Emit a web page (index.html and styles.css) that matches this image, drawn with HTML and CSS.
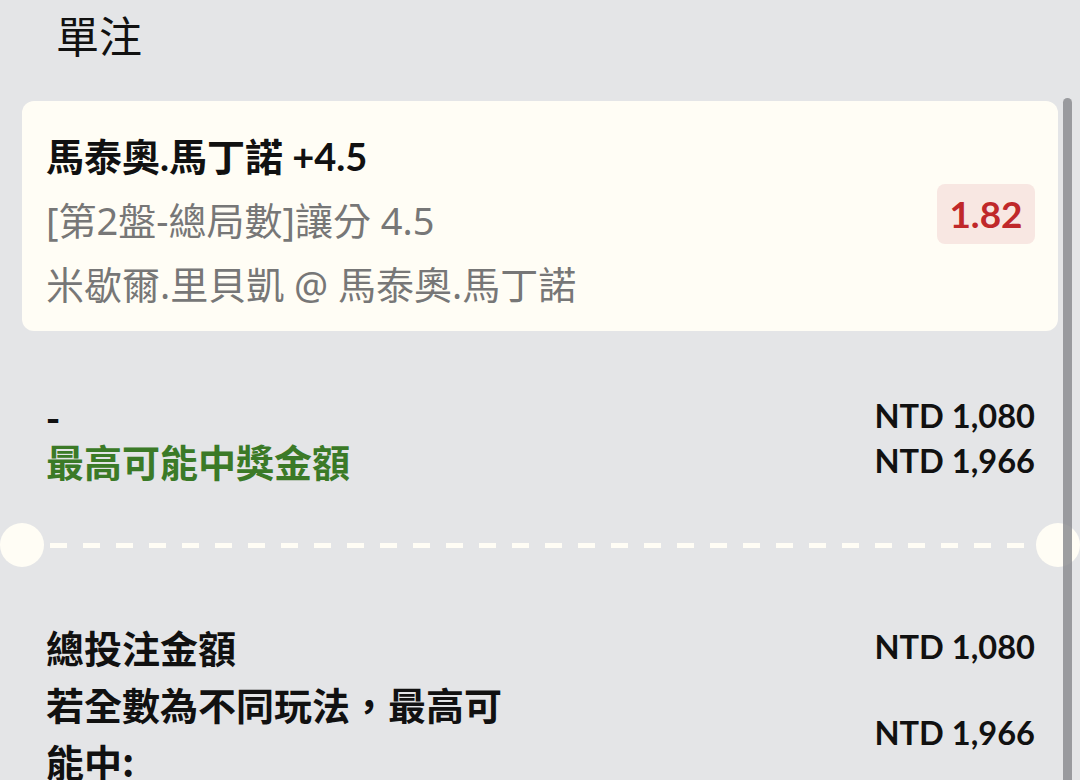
FILE: index.html
```html
<!DOCTYPE html>
<html lang="zh-Hant">
<head>
<meta charset="utf-8">
<link rel="stylesheet" href="styles.css">
</head>
<body>
<div class="page">
  <header class="header"><h1 class="title">單注</h1></header>
  <section class="card">
    <div class="card-info">
      <div class="sel">馬泰奧.馬丁諾 +4.5</div>
      <div class="sub">[第2盤-總局數]讓分 4.5</div>
      <div class="sub">米歇爾.里貝凱 @ 馬泰奧.馬丁諾</div>
    </div>
    <div class="odds">1.82</div>
  </section>
  <section class="stake">
    <div class="stake-left">
      <div class="dash-label">-</div>
      <div class="win-label">最高可能中獎金額</div>
    </div>
    <div class="stake-right">
      <div class="amt">NTD 1,080</div>
      <div class="amt">NTD 1,966</div>
    </div>
  </section>
  <div class="divider"><span class="notch"></span><span class="dashes"></span><span class="notch"></span></div>
  <section class="summary">
    <div class="sum-row">
      <div class="sum-label">總投注金額</div>
      <div class="amt">NTD 1,080</div>
    </div>
    <div class="sum-row">
      <div class="sum-label wrap">若全數為不同玩法，最高可能中:</div>
      <div class="amt">NTD 1,966</div>
    </div>
  </section>
  <div class="scrollbar"></div>
</div>
</body>
</html>
```

FILE: styles.css
```css
* { box-sizing: border-box; margin: 0; padding: 0; }
html, body { width: 1080px; height: 780px; overflow: hidden; }
body {
  background: #e4e5e7;
  font-family: Lato, "Noto Sans CJK TC", sans-serif;
  color: #111;
}
.page { position: relative; height: 780px; }
.header { height: 101px; padding-left: 56px; }
.title {
  font-family: "Noto Sans CJK TC", sans-serif;
  font-weight: 400;
  font-size: 43px;
  line-height: 68px;
  color: #111;
}
.card {
  margin: 0 22px;
  height: 230px;
  background: #fffdf5;
  border-radius: 12px;
  padding: 23px 23px 14px 24px;
  display: flex;
  align-items: center;
  justify-content: space-between;
}
.card-info { display: flex; flex-direction: column; align-self: flex-start; }
.sel {
  font-size: 38px;
  font-weight: 700;
  line-height: 64px;
  color: #111;
}
.sub {
  font-family: "Noto Sans", "Noto Sans CJK TC", sans-serif;
  font-size: 38px;
  line-height: 64px;
  color: #777;
}
.odds {
  background: #f8e7e2;
  color: #c0282a;
  border-radius: 8px;
  width: 98px;
  height: 60px;
  font-size: 37px;
  font-weight: 700;
  line-height: 60px;
  text-align: center;
  margin-top: -14px;
}
.stake {
  margin: 62px 22px 0 46px;
  display: flex;
  justify-content: space-between;
}
.stake-left, .stake-right { display: flex; flex-direction: column; }
.dash-label {
  font-family: "Noto Sans CJK TC", sans-serif;
  font-size: 38px;
  font-weight: 700;
  line-height: 45px;
}
.win-label {
  font-family: "Noto Sans CJK TC", sans-serif;
  font-size: 38px;
  font-weight: 700;
  line-height: 45px;
  color: #3b7a27;
}
.stake-right { align-items: flex-end; padding-right: 23px; }
.amt {
  font-family: Lato, sans-serif;
  font-weight: 700;
  font-size: 32.6px;
  line-height: 45px;
  color: #111;
}
.divider {
  margin-top: 40px;
  height: 44px;
  display: flex;
  align-items: center;
}
.notch {
  width: 44px;
  height: 44px;
  border-radius: 50%;
  background: #fffdf5;
  flex: none;
}
.dashes {
  flex: 1;
  height: 5px;
  margin: 0 6px;
  background: repeating-linear-gradient(90deg, #fffdf5 0 17px, transparent 17px 33px);
}
.summary { margin: 51px 45px 0 46px; }
.sum-row {
  display: flex;
  justify-content: space-between;
  align-items: center;
}
.sum-label {
  font-family: "Noto Sans CJK TC", sans-serif;
  font-size: 38px;
  font-weight: 700;
  line-height: 57px;
}
.sum-label.wrap { width: 470px; }
.scrollbar {
  position: absolute;
  left: 1063px;
  top: 98px;
  width: 9px;
  height: 700px;
  border-radius: 5px 5px 0 0;
  background: rgba(140, 141, 144, 0.85);
}
```
